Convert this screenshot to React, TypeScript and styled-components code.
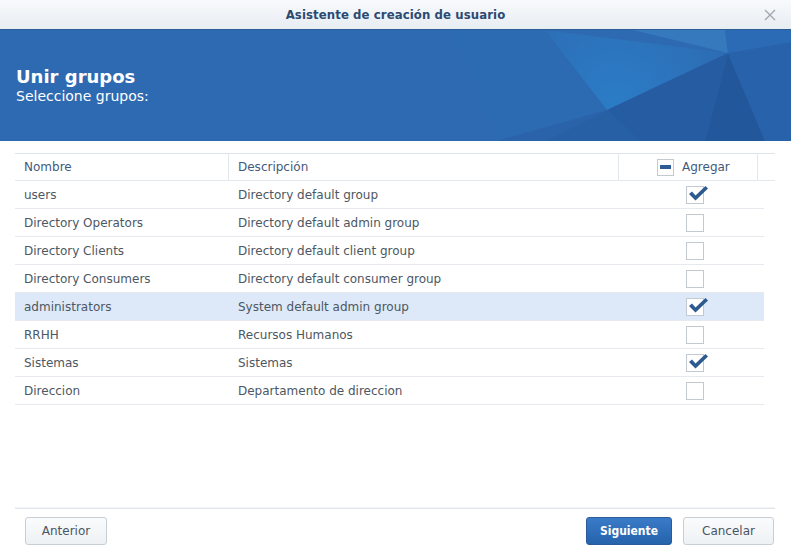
import React from "react";
import styled, { createGlobalStyle } from "styled-components";

const GlobalStyle = createGlobalStyle`
  html, body { margin: 0; padding: 0; background: #ffffff; }
  body { font-family: "DejaVu Sans", Verdana, sans-serif; }
`;

const Dialog = styled.div`
  width: 791px;
  height: 551px;
  display: flex;
  flex-direction: column;
  background: #ffffff;
  overflow: hidden;
`;

const TitleBar = styled.div`
  height: 29px;
  flex: none;
  display: grid;
  grid-template-columns: 1fr auto 1fr;
  align-items: center;
  background: linear-gradient(#f8fafc, #e8edf2);
  border-bottom: 1px solid #2c5c96;
`;

const TitleText = styled.div`
  grid-column: 2;
  font-family: "DejaVu Sans Condensed", "DejaVu Sans", sans-serif;
  font-weight: bold;
  font-size: 13px;
  color: #2b4a72;
  letter-spacing: 0.1px;
`;

const CloseButton = styled.div`
  grid-column: 3;
  justify-self: end;
  width: 14px;
  height: 14px;
  margin-right: 14px;
  display: flex;
  align-items: center;
  justify-content: center;
`;

const Banner = styled.div`
  position: relative;
  height: 111px;
  flex: none;
  background: #2e6ab1;
  overflow: hidden;
`;

const BannerArt = styled.svg`
  position: absolute;
  inset: 0;
  width: 100%;
  height: 100%;
`;

const BannerText = styled.div`
  position: relative;
  padding: 36px 16px 0 16px;
  color: #ffffff;
`;

const BannerTitle = styled.div`
  font-weight: bold;
  font-size: 18px;
  line-height: 22px;
`;

const BannerSubtitle = styled.div`
  font-size: 14px;
  line-height: 17px;
`;

const Content = styled.div`
  flex: 1;
  padding: 12px 16px 0 15px;
`;

const HeaderRow = styled.div`
  display: grid;
  grid-template-columns: 214px 390px 139px 17px;
  height: 26px;
  border-top: 1px solid #dfe4ea;
  border-bottom: 1px solid #e3e8ed;
`;

const HeaderCell = styled.div<{ $pad?: number; $last?: boolean }>`
  display: flex;
  align-items: center;
  gap: 8px;
  padding-left: ${(p) => p.$pad ?? 9}px;
  border-right: ${(p) => (p.$last ? "none" : "1px solid #e3e8ed")};
  font-size: 12px;
  color: #3f5a7b;
`;

const Row = styled.div<{ $selected?: boolean }>`
  display: grid;
  grid-template-columns: 214px 390px 145px;
  width: 749px;
  height: 27px;
  border-bottom: 1px solid #e6eaee;
  background: ${(p) => (p.$selected ? "#dde9f8" : "transparent")};
`;

const Cell = styled.div`
  display: flex;
  align-items: center;
  padding-left: 9px;
  font-size: 12px;
  color: #4d5762;
  white-space: nowrap;
`;

const CheckCell = styled.div`
  display: flex;
  align-items: center;
  padding-left: 67px;
`;

const Box = styled.div<{ $size: number }>`
  position: relative;
  width: ${(p) => p.$size - 2}px;
  height: ${(p) => p.$size - 2}px;
  border: 1px solid #c3c9d0;
  background: #ffffff;
  display: flex;
  align-items: center;
  justify-content: center;
  flex: none;
`;

const Minus = styled.div`
  width: 11px;
  height: 4px;
  background: #2d5b93;
`;

const CheckMark = styled.svg`
  position: absolute;
  left: 1px;
  top: -2px;
  width: 20px;
  height: 18px;
  overflow: visible;
`;

const Footer = styled.div`
  flex: none;
  margin: 0 16px 0 15px;
  border-top: 1px solid #e1e5e9;
  box-shadow: 0 -1px 0 #f2f4f6;
  padding: 8px 1px 6px 10px;
  display: flex;
  align-items: center;
  gap: 11px;
`;

const Spacer = styled.div`
  flex: 1;
`;

const Button = styled.button<{ $primary?: boolean; $width: number }>`
  height: 28px;
  width: ${(p) => p.$width}px;
  border-radius: 3px;
  border: 1px solid ${(p) => (p.$primary ? "#2a5c9c" : "#c6ced6")};
  background: ${(p) =>
    p.$primary
      ? "linear-gradient(#3a7bc8, #2563ab)"
      : "linear-gradient(#fafbfc, #eef1f4)"};
  color: ${(p) => (p.$primary ? "#ffffff" : "#4a5563")};
  font-family: ${(p) =>
    p.$primary
      ? '"DejaVu Sans Condensed", "DejaVu Sans", sans-serif'
      : '"DejaVu Sans", sans-serif'};
  font-weight: ${(p) => (p.$primary ? "bold" : "normal")};
  font-size: 12px;
  padding: 0;
  cursor: pointer;
`;

const groups = [
  { name: "users", desc: "Directory default group", checked: true },
  { name: "Directory Operators", desc: "Directory default admin group", checked: false },
  { name: "Directory Clients", desc: "Directory default client group", checked: false },
  { name: "Directory Consumers", desc: "Directory default consumer group", checked: false },
  { name: "administrators", desc: "System default admin group", checked: true, selected: true },
  { name: "RRHH", desc: "Recursos Humanos", checked: false },
  { name: "Sistemas", desc: "Sistemas", checked: true },
  { name: "Direccion", desc: "Departamento de direccion", checked: false },
];

function Checkbox({ checked }: { checked: boolean }) {
  return (
    <Box $size={18}>
      {checked && (
        <CheckMark viewBox="0 0 20 18">
          <polygon points="1,9 4,6.5 7.5,10.5 17.5,1 20,3.5 7.5,15.5" fill="#2c5a90" />
        </CheckMark>
      )}
    </Box>
  );
}

export default function App() {
  return (
    <>
      <GlobalStyle />
      <Dialog>
        <TitleBar>
          <TitleText>Asistente de creación de usuario</TitleText>
          <CloseButton>
            <svg width="12" height="12" viewBox="0 0 12 12">
              <path d="M1 1 L11 11 M11 1 L1 11" stroke="#9ea6ae" strokeWidth="1.3" />
            </svg>
          </CloseButton>
        </TitleBar>
        <Banner>
          <BannerArt viewBox="0 0 791 111" preserveAspectRatio="none">
            <defs>
              <radialGradient id="glow" cx="615" cy="72" r="130" gradientUnits="userSpaceOnUse">
                <stop offset="0" stopColor="#2b7cc6" />
                <stop offset="1" stopColor="#2d6bb2" />
              </radialGradient>
              <linearGradient id="fadeLeft" x1="0" y1="0" x2="1" y2="0">
                <stop offset="0" stopColor="#2e6ab1" />
                <stop offset="1" stopColor="#2c68b0" />
              </linearGradient>
            </defs>
            <polygon points="450,0 545,0 728,23 607,80 497,111 470,40" fill="#2c6ab2" />
            <polygon points="545,0 728,23 607,80" fill="url(#glow)" />
            <polygon points="497,111 607,80 545,111" fill="#2b63aa" />
            <polygon points="545,111 607,80 640,111" fill="#2860a6" />
            <polygon points="607,80 728,23 705,111 640,111" fill="#265ca2" />
            <polygon points="728,23 705,111 765,111" fill="#23579c" />
            <polygon points="728,23 791,12 791,111 765,111" fill="#2862ab" />
            <polygon points="633,0 725,0 728,23" fill="#3779bd" />
            <polygon points="725,0 791,0 791,12 728,23" fill="#2b6bb5" />
          </BannerArt>
          <BannerText>
            <BannerTitle>Unir grupos</BannerTitle>
            <BannerSubtitle>Seleccione grupos:</BannerSubtitle>
          </BannerText>
        </Banner>
        <Content>
          <HeaderRow>
            <HeaderCell>Nombre</HeaderCell>
            <HeaderCell>Descripción</HeaderCell>
            <HeaderCell $pad={38}>
              <Box $size={17}>
                <Minus />
              </Box>
              Agregar
            </HeaderCell>
            <HeaderCell $last />
          </HeaderRow>
          {groups.map((g) => (
            <Row key={g.name} $selected={g.selected}>
              <Cell>{g.name}</Cell>
              <Cell>{g.desc}</Cell>
              <CheckCell>
                <Checkbox checked={g.checked} />
              </CheckCell>
            </Row>
          ))}
        </Content>
        <Footer>
          <Button $width={82}>Anterior</Button>
          <Spacer />
          <Button $primary $width={86}>Siguiente</Button>
          <Button $width={91}>Cancelar</Button>
        </Footer>
      </Dialog>
    </>
  );
}
